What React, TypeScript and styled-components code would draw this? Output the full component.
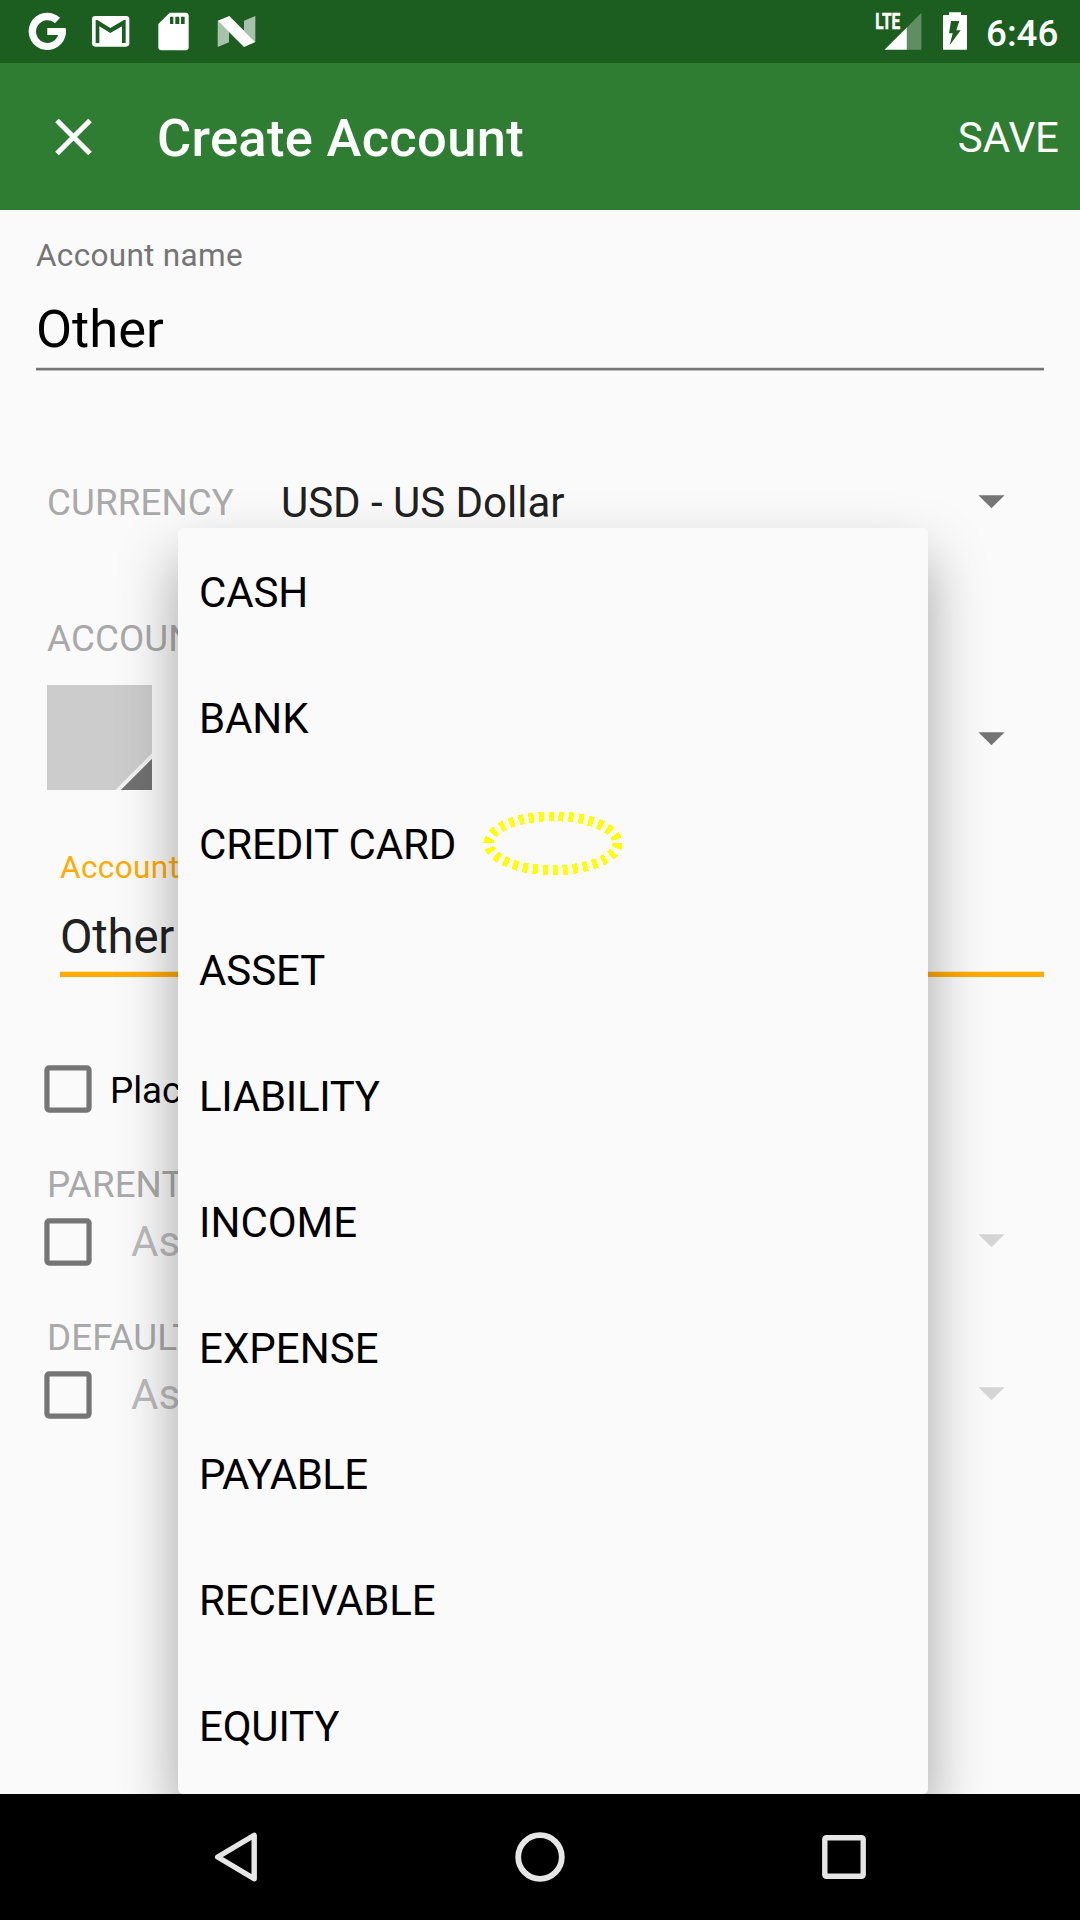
import React from "react";
import styled, { createGlobalStyle } from "styled-components";

const Global = createGlobalStyle`
  html, body { margin: 0; padding: 0; }
  *, *::before, *::after { box-sizing: border-box; }
  body { font-family: Roboto, "Noto Sans", sans-serif; background: #fafafa; }
  svg { display: block; flex: none; }
`;

const Phone = styled.div`
  width: 1080px;
  height: 1920px;
  display: flex;
  flex-direction: column;
  background: #fafafa;
  overflow: hidden;
`;

const Content = styled.main`
  position: relative;
  flex: 1;
  display: flex;
  flex-direction: column;
  overflow: hidden;
`;

const StatusBar = styled.header`
  height: 63px;
  flex: none;
  display: flex;
  justify-content: space-between;
  padding: 0 21px 0 28px;
  background: #1b5e20;
`;

const Notifications = styled.div`
  display: flex;
  gap: 23px;
`;

const SystemIcons = styled.div`
  display: flex;
  gap: 16px;
`;

const Clock = styled.time`
  width: 73px;
  padding-top: 2px;
  font-size: 36.75px;
  font-weight: 500;
  line-height: 63px;
  color: #fff;
`;

const AppBar = styled.div`
  height: 147px;
  flex: none;
  display: flex;
  align-items: center;
  padding: 0 21px 0 54px;
  background: #2e7d32;
  color: #fff;
`;

const Title = styled.h1`
  flex: 1;
  margin: 2px 0 0 63px;
  font-size: 52.5px;
  font-weight: 500;
  line-height: 62px;
  letter-spacing: 0.3px;
`;

const SaveButton = styled.button`
  margin: 2px 0 0;
  padding: 0;
  border: 0;
  background: none;
  font: 400 42px/50px Roboto, sans-serif;
  color: #fff;
`;

const Form = styled.form`
  display: flex;
  flex-direction: column;
  padding: 28px 36px 0;
`;

const Field = styled.div<{ $inset?: boolean }>`
  display: flex;
  flex-direction: column;
  margin-left: ${(p) => (p.$inset ? "24px" : "0")};
  margin-top: ${(p) => (p.$inset ? "60px" : "0")};
`;

const FieldLabel = styled.label<{ $accent?: boolean }>`
  font-size: 31.5px;
  line-height: 36px;
  letter-spacing: ${(p) => (p.$accent ? "0.4px" : "0.31px")};
  color: ${(p) => (p.$accent ? "#ffab00" : "#757575")};
`;

const FieldValue = styled.div<{ $dropdown?: boolean }>`
  margin-top: ${(p) => (p.$dropdown ? "23px" : "24px")};
  font-size: ${(p) => (p.$dropdown ? "47.25px" : "52.5px")};
  line-height: ${(p) => (p.$dropdown ? "56px" : "62px")};
  letter-spacing: ${(p) => (p.$dropdown ? "-0.2px" : "0")};
  color: ${(p) => (p.$dropdown ? "#212121" : "#000")};
`;

const Underline = styled.div<{ $accent?: boolean }>`
  height: ${(p) => (p.$accent ? "6px" : "4px")};
  margin-top: ${(p) => (p.$accent ? "6px" : "7px")};
  background: ${(p) =>
    p.$accent
      ? "linear-gradient(#fbe7bd 1px, #ffab00 1px)"
      : "linear-gradient(#dcdcdc 1px, #757575 1px, #757575 3px, #bdbdbd 3px)"};
`;

const Row = styled.div<{ $height: number; $top: number; $left: number }>`
  display: flex;
  align-items: center;
  height: ${(p) => p.$height}px;
  margin-top: ${(p) => p.$top}px;
  padding-left: ${(p) => p.$left}px;
  padding-right: 39px;
  white-space: nowrap;
`;

const Caption = styled.span`
  margin-top: 2px;
  font-size: 36.75px;
  line-height: 42px;
  letter-spacing: 0.1px;
  color: #a9a9a9;
`;

const SpinnerText = styled.span<{ $left: number; $disabled?: boolean }>`
  flex: 1;
  margin-top: ${(p) => (p.$disabled ? "0" : "2px")};
  margin-left: ${(p) => p.$left}px;
  font-size: 42px;
  line-height: 50px;
  letter-spacing: -0.02px;
  color: ${(p) => (p.$disabled ? "#bbb" : "#212121")};
`;

const CheckText = styled.span`
  margin: 4px 0 0 18px;
  font-size: 36.75px;
  line-height: 42px;
  color: #000;
`;

const Swatch = styled.div`
  width: 105px;
  height: 105px;
  background: #ccc;
`;

const Spacer = styled.div`
  flex: 1;
`;

const CaretBox = styled.span<{ $shift: number }>`
  margin-top: ${(p) => p.$shift}px;
`;

const Menu = styled.ul`
  position: absolute;
  left: 178px;
  top: 318px;
  width: 750px;
  height: 1266px;
  margin: 0;
  padding: 2px 0 0;
  list-style: none;
  background: #fafafa;
  border-radius: 5px;
  box-shadow: 0 30px 58px rgba(0, 0, 0, 0.35);
`;

const MenuItem = styled.li<{ $tracking: number }>`
  display: flex;
  align-items: center;
  gap: 27px;
  height: 126px;
  padding-left: 21px;
  font-size: 42px;
  line-height: 50px;
  letter-spacing: ${(p) => p.$tracking}px;
  color: #000;
`;

const NavBar = styled.nav`
  height: 126px;
  flex: none;
  display: flex;
  align-items: center;
  justify-content: center;
  gap: 244px;
  background: #000;
`;

const GoogleIcon = () => (
  <svg width="40" height="63" viewBox="28 0 40 63" fill="#fff">
    <path d="M60.1 17.7L54.9 23.2A11.3 11.3 0 1 0 58.1 35H47.3V28H65.7A18.7 18.7 0 1 1 60.1 17.7Z" />
  </svg>
);

const GmailIcon = () => (
  <svg width="40" height="63" viewBox="273 0 120 189">
    <rect x="276" y="48" width="112" height="92" rx="10" fill="#fff" />
    <path d="M287 60H292L331 84L372 60H377V129H366V79L331 99L298 79V129H287Z" fill="#1b5e20" />
  </svg>
);

const SdCardIcon = () => (
  <svg width="40" height="63" viewBox="462 0 120 189">
    <path d="M509 38H557Q566 38 566 47V142Q566 151 557 151H484Q475 151 475 142V72Z" fill="#fff" />
    <path d="M510 50H520V72H510ZM526 50H538V72H526ZM543 50H554V72H543Z" fill="#1b5e20" />
  </svg>
);

const NougatIcon = () => (
  <svg width="40" height="63" viewBox="651 0 120 189" fill="#fff">
    <path d="M653 62L687 95V127L653 141Z" opacity=".62" />
    <path d="M766 48V126L732 92V62Z" opacity=".62" />
    <path d="M653 62L688 48L766 126L732 141Z" />
  </svg>
);

const SignalIcon = () => (
  <svg width="52" height="63" viewBox="872 0 52 63" fill="#fff">
    <text
      x="875.3"
      y="29"
      fontFamily="Roboto, sans-serif"
      fontWeight="700"
      fontSize="22.3"
      textLength="25"
      lengthAdjust="spacingAndGlyphs"
      stroke="#fff"
      strokeWidth=".5"
    >
      LTE
    </text>
    <path d="M884.5 49.7L906.8 27.4V49.7Z" />
    <path d="M906.8 27.4L921.4 12.8V49.7H906.8Z" opacity=".3" />
  </svg>
);

const BatteryIcon = () => (
  <svg width="30" height="63" viewBox="420 0 90 189">
    <path d="M447 37H483V45H501V149H429V45H447Z" fill="#fff" />
    <path d="M453 63H478L469 91H482L449 136L458 100H447Z" fill="#1b5e20" />
  </svg>
);

const CloseIcon = () => (
  <svg width="40" height="40" viewBox="0 0 40 40" stroke="#fff" strokeWidth="5.2">
    <path d="M3 3.5L36 36.5M36 3.5L3 36.5" />
  </svg>
);

const Caret = ({ shift = 0, disabled = false }: { shift?: number; disabled?: boolean }) => (
  <CaretBox $shift={shift}>
    <svg width="27" height="13" viewBox="0 0 27 13" fill={disabled ? "#d5d5d5" : "#757575"}>
      <path d="M.4 .2H26.6L13.5 13.2Z" />
    </svg>
  </CaretBox>
);

const Checkbox = () => (
  <svg width="48" height="48" viewBox="0 0 48 48">
    <rect x="2.95" y="2.95" width="42.1" height="42.1" rx="2.2" fill="none" stroke="#757575" strokeWidth="5.2" />
  </svg>
);

const Highlight = () => (
  <svg width="140" height="66" viewBox="0 0 140 66">
    <ellipse cx="70" cy="31.2" rx="64.5" ry="27" fill="none" stroke="#ff0" strokeWidth="10" strokeDasharray="5 5" shapeRendering="crispEdges" />
  </svg>
);

const accountTypes = [
  { name: "CASH", tracking: -0.15 },
  { name: "BANK", tracking: -0.1 },
  { name: "CREDIT CARD", tracking: -0.1, highlighted: true },
  { name: "ASSET", tracking: -0.1 },
  { name: "LIABILITY", tracking: -0.3 },
  { name: "INCOME", tracking: 0 },
  { name: "EXPENSE", tracking: 0.05 },
  { name: "PAYABLE", tracking: -0.55 },
  { name: "RECEIVABLE", tracking: -0.1 },
  { name: "EQUITY", tracking: -0.2 },
];

export default function App() {
  return (
    <Phone>
      <Global />
      <StatusBar>
        <Notifications>
          <GoogleIcon />
          <GmailIcon />
          <SdCardIcon />
          <NougatIcon />
        </Notifications>
        <SystemIcons>
          <SignalIcon />
          <BatteryIcon />
          <Clock>6:46</Clock>
        </SystemIcons>
      </StatusBar>
      <AppBar>
        <CloseIcon />
        <Title>Create Account</Title>
        <SaveButton>SAVE</SaveButton>
      </AppBar>
      <Content>
        <Form>
          <Field>
            <FieldLabel>Account name</FieldLabel>
            <FieldValue>Other</FieldValue>
            <Underline />
          </Field>
          <Row $height={60} $top={101} $left={11}>
            <Caption>CURRENCY</Caption>
            <SpinnerText $left={47}>USD - US Dollar</SpinnerText>
            <Caret shift={-2} />
          </Row>
          <Row $height={42} $top={85} $left={11}>
            <Caption>ACCOUNT</Caption>
          </Row>
          <Row $height={105} $top={26} $left={11}>
            <Swatch>
              <svg width="105" height="105" viewBox="0 0 105 105">
                <path d="M68.3 105L105 68.3V105Z" fill="#f2f2f2" />
                <path d="M73.8 105L105 73.8V105Z" fill="#717171" />
              </svg>
            </Swatch>
            <Spacer />
            <Caret shift={2} />
          </Row>
          <Field $inset>
            <FieldLabel $accent>Account</FieldLabel>
            <FieldValue $dropdown>Other</FieldValue>
            <Underline $accent />
          </Field>
          <Row $height={48} $top={88} $left={8}>
            <Checkbox />
            <CheckText>Place</CheckText>
          </Row>
          <Row $height={42} $top={50} $left={11}>
            <Caption>PARENT</Caption>
          </Row>
          <Row $height={48} $top={13} $left={8}>
            <Checkbox />
            <SpinnerText $left={39} $disabled>Ass</SpinnerText>
            <Caret disabled shift={-4} />
          </Row>
          <Row $height={42} $top={50} $left={11}>
            <Caption>DEFAULT</Caption>
          </Row>
          <Row $height={48} $top={13} $left={8}>
            <Checkbox />
            <SpinnerText $left={39} $disabled>Ass</SpinnerText>
            <Caret disabled shift={-4} />
          </Row>
        </Form>
        <Menu>
          {accountTypes.map((type) => (
            <MenuItem key={type.name} $tracking={type.tracking}>
              {type.name}
              {type.highlighted && <Highlight />}
            </MenuItem>
          ))}
        </Menu>
      </Content>
      <NavBar>
        <svg width="60" height="60" viewBox="0 0 60 60" fill="none" stroke="#e6e6e6" strokeWidth="5.4" strokeLinejoin="round">
          <path d="M11.7 30L48.2 8.3V51.7Z" />
        </svg>
        <svg width="60" height="60" viewBox="0 0 60 60" fill="none" stroke="#e6e6e6" strokeWidth="5.8">
          <circle cx="30" cy="30" r="21.8" />
        </svg>
        <svg width="60" height="60" viewBox="0 0 60 60" fill="none" stroke="#e6e6e6" strokeWidth="5.4">
          <rect x="10.8" y="10.8" width="38.4" height="38.4" rx="1.5" />
        </svg>
      </NavBar>
    </Phone>
  );
}
